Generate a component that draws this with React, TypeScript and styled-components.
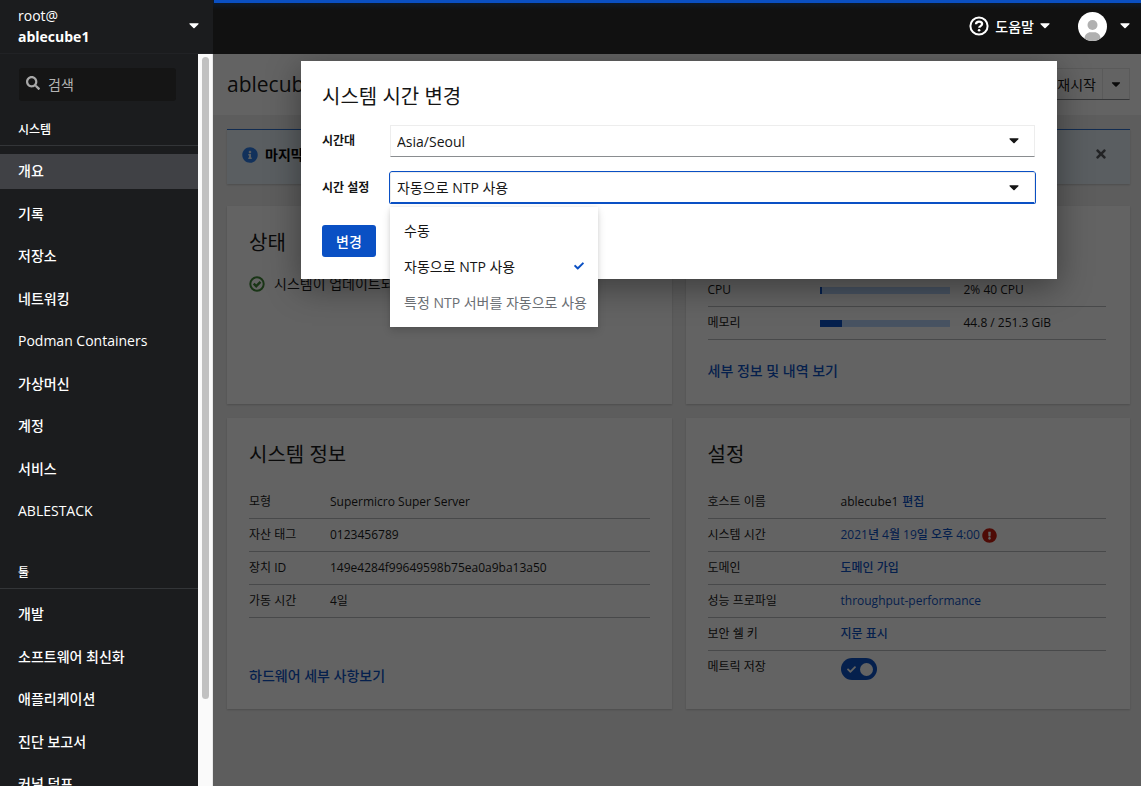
import React, { useState } from "react";
import styled, { createGlobalStyle } from "styled-components";
import { FaSearch, FaInfoCircle, FaTimes, FaExclamationCircle, FaCheck, FaCaretDown } from "react-icons/fa";

const GlobalStyle = createGlobalStyle`
  *, *::before, *::after { box-sizing: border-box; }
  body {
    margin: 0;
    color: #151515;
    font-family: "Open Sans", "Noto Sans CJK KR", sans-serif;
    font-size: 14px;
    line-height: 21px;
  }
  button, input, select { font: inherit; color: inherit; }
  ul { margin: 0; padding: 0; list-style: none; }
  a { color: inherit; text-decoration: none; }
`;

const Shell = styled.div`
  display: grid;
  grid-template-columns: 213px minmax(0, 1fr);
  height: 100vh;
  overflow: hidden;
`;

/* ---------- sidebar ---------- */

const Sidebar = styled.aside`
  display: flex;
  flex-direction: column;
  min-height: 0;
  background: #1b1c1e;
  color: #fff;
`;

const HostButton = styled.button`
  display: flex;
  flex: none;
  align-items: center;
  justify-content: space-between;
  height: 54px;
  padding: 0 14px 2px 18px;
  border: 0;
  border-bottom: 1px solid #212225;
  background: transparent;
  text-align: left;
`;

const HostName = styled.span`
  display: flex;
  flex-direction: column;
`;

const SidebarBody = styled.div`
  display: flex;
  flex: 1;
  min-height: 0;
`;

const NavScroll = styled.div`
  flex: 1;
  min-width: 0;
  overflow: hidden;
`;

const ScrollTrack = styled.div`
  width: 15px;
  padding: 3px 3px 0 4px;
  border-right: 1px solid #e8e8e8;
  background: #fafafa;
`;

const ScrollThumb = styled.div`
  height: 88%;
  border-radius: 4px;
  background: #c1c1c1;
`;

const SearchBox = styled.label`
  display: flex;
  align-items: center;
  gap: 8px;
  height: 33px;
  margin: 14px 22px 11px 19px;
  padding: 0 7px;
  border-radius: 3px;
  background: #151515;
  color: #a8a8a8;

  svg { flex: none; margin-bottom: 4px; }
`;

const SearchInput = styled.input`
  width: 100%;
  min-width: 0;
  padding: 0;
  border: 0;
  outline: 0;
  background: transparent;

  &::placeholder { color: #b4b4b4; opacity: 1; }
`;

const NavHeading = styled.h2`
  margin: 0 0 8px;
  padding: 9px 18px 7px;
  border-bottom: 1px solid #333538;
  font-size: 12px;
  font-weight: 500;
  line-height: 17px;
`;

const NavList = styled.ul<{ $height: number }>`
  display: flex;
  flex-direction: column;
  justify-content: space-between;
  height: ${(p) => p.$height}px;
  margin-bottom: 26px;
`;

const NavLink = styled.a<{ $active?: boolean }>`
  display: block;
  padding: 6px 18px 8px;
  background: ${(p) => (p.$active ? "#404145" : "transparent")};
  font-weight: 500;
  white-space: nowrap;
`;

/* ---------- top bar ---------- */

const Workspace = styled.div`
  display: flex;
  flex-direction: column;
  min-height: 0;
`;

const TopBar = styled.header`
  position: relative;
  display: flex;
  flex: none;
  align-items: center;
  justify-content: flex-end;
  gap: 28px;
  height: 54px;
  padding: 0 11px 2px 0;
  background: linear-gradient(#0c1a2b 3px, #111 10px);
  color: #fff;
`;

const Progress = styled.div`
  position: absolute;
  top: 0;
  right: 0;
  left: 1px;
  height: 3px;
  background: #0a50c4;
`;

const TopButton = styled.button<{ $gap: number }>`
  display: flex;
  align-items: center;
  gap: ${(p) => p.$gap}px;
  padding: 0;
  border: 0;
  background: transparent;
  font-weight: 500;
`;

/* ---------- page ---------- */

const Page = styled.main`
  position: relative;
  flex: 1;
  min-height: 0;
  overflow: hidden;
  background: #f0f0f0;
`;

const PageHeader = styled.div`
  display: flex;
  align-items: center;
  justify-content: space-between;
  height: 61px;
  padding: 0 11px 1px 14px;
  background: #fff;
`;

const HostTitle = styled.h1`
  margin: 0;
  font-size: 21px;
  font-weight: 400;
  line-height: 30px;
`;

const SplitButton = styled.div`
  display: flex;
  height: 32px;
  border: 1px solid #e6e6e6;
  border-bottom-color: #8a8d90;
`;

const SplitPart = styled.button`
  display: flex;
  align-items: center;
  padding: 0 6px;
  border: 0;
  background: transparent;

  & + & { border-left: 1px solid #e6e6e6; }
`;

const Content = styled.div`
  display: flex;
  flex-direction: column;
  gap: 22px;
  padding: 14px 11px 14px 14px;
`;

const Alert = styled.div`
  display: flex;
  align-items: flex-start;
  justify-content: space-between;
  height: 55px;
  padding: 14px 22px 0 15px;
  border-top: 1px solid #2b6fd0;
  background: #e7f1fa;
  box-shadow: 0 1px 2px rgba(3, 3, 3, 0.2);
`;

const AlertTitle = styled.strong`
  display: flex;
  align-items: center;
  gap: 7px;
  color: #000;

  svg { color: #2b7de9; }
`;

const IconButton = styled.button`
  display: flex;
  padding: 3px 0;
  border: 0;
  background: transparent;
  color: #55585c;
`;

const Cards = styled.div`
  display: grid;
  grid-template-columns: repeat(2, minmax(0, 1fr));
  gap: 14px;
`;

const Card = styled.section`
  display: flex;
  flex-direction: column;
  padding: 20px 22px 22px;
  background: #fff;
  box-shadow: 0 1px 2px rgba(3, 3, 3, 0.2);
`;

const SettingsCard = styled(Card)`
  padding-right: 24px;
`;

const CardTitle = styled.h2`
  margin: 0 0 14px;
  font-size: 20px;
  font-weight: 400;
  line-height: 34px;
`;

const StatusLine = styled.div`
  display: flex;
  align-items: center;
  gap: 9px;
  line-height: 20px;

  svg { color: #3e8635; }
`;

const CardLink = styled.a`
  margin-top: auto;
  padding-top: 20px;
  color: #0a50c4;
  font-weight: 500;
  line-height: 22px;
`;

const DataTable = styled.table<{ $label: number }>`
  width: 100%;
  border-spacing: 0;
  table-layout: fixed;
  font-size: 12px;
  line-height: 16px;

  th, td {
    height: 33px;
    padding: 8px 0;
    border-bottom: 1px solid #b8bbbe;
    font-weight: 400;
    text-align: left;
    vertical-align: top;
    white-space: nowrap;
  }
  th { width: ${(p) => p.$label}px; }
  tr.last th, tr.last td { height: 36px; border-bottom: 0; }
  tr.last td { padding: 7px 0; }
`;

const Link = styled.a`
  color: #0a50c4;
  font-weight: 500;
`;

const ValueLine = styled.span<{ $gap: number }>`
  display: flex;
  align-items: center;
  gap: ${(p) => p.$gap}px;
  height: 16px;
`;

const Meter = styled.span`
  display: block;
  width: 130px;
  height: 7px;
  background: #b9d4fb;
`;

const MeterFill = styled.span`
  display: block;
  height: 100%;
  background: #0a50c4;
`;

const Toggle = styled.label`
  position: relative;
  display: flex;
  align-items: center;
  justify-content: space-between;
  width: 36px;
  height: 22px;
  padding: 0 4px 0 6px;
  border-radius: 11px;
  background: #0a50c4;
  color: #fff;

  input {
    position: absolute;
    inset: 0;
    width: 100%;
    height: 100%;
    margin: 0;
    opacity: 0;
  }
`;

const ToggleKnob = styled.span`
  width: 13px;
  height: 13px;
  border-radius: 50%;
  background: #fff;
`;

/* ---------- dialog ---------- */

const Backdrop = styled.div`
  position: absolute;
  inset: 0;
  padding: 7px 84px 0 88px;
  background: rgba(3, 3, 3, 0.62);
`;

const Dialog = styled.form`
  padding: 18px 22px 22px 21px;
  background: #fff;
  box-shadow: 0 8px 32px rgba(3, 3, 3, 0.4);
`;

const DialogTitle = styled.h2`
  margin: 0 0 10px;
  font-size: 20px;
  font-weight: 400;
  line-height: 36px;
`;

const Field = styled.div`
  display: grid;
  grid-template-columns: 68px minmax(0, 1fr);
  align-items: center;
  margin-bottom: 15px;
`;

const FieldLabel = styled.label`
  font-size: 12px;
  font-weight: 700;
  line-height: 18px;
`;

const SelectWrap = styled.div`
  position: relative;
  display: grid;
  align-items: center;

  > svg {
    position: absolute;
    right: 16px;
    pointer-events: none;
  }
`;

const Select = styled.select<{ $focused?: boolean }>`
  appearance: none;
  width: 100%;
  height: 32px;
  padding: 0 32px 0 6px;
  border: 1px solid #ededed;
  border-bottom: ${(p) => (p.$focused ? "2px solid #0a50c4" : "1px solid #8a8d90")};
  border-radius: ${(p) => (p.$focused ? 2 : 0)}px;
  outline: none;
  box-shadow: ${(p) => (p.$focused ? "-1px 0 #0a50c4, 1px 0 #0a50c4, 0 -1px #0a50c4" : "none")};
  background: #fff;
`;

const Menu = styled.ul`
  position: absolute;
  top: 35px;
  left: 0;
  z-index: 1;
  width: 208px;
  padding: 6px 0;
  background: #fff;
  box-shadow: 0 4px 8px rgba(3, 3, 3, 0.14), 0 0 4px rgba(3, 3, 3, 0.08);
`;

const MenuItem = styled.button`
  display: flex;
  align-items: center;
  justify-content: space-between;
  width: 100%;
  height: 36px;
  padding: 0 14px 1px;
  border: 0;
  background: transparent;
  white-space: nowrap;

  &:disabled { color: #6a6e73; }
  svg { color: #0a50c4; margin-bottom: 2px; }
`;

const PrimaryButton = styled.button`
  height: 32px;
  margin-top: 6px;
  padding: 0 14px;
  border: 0;
  border-radius: 3px;
  background: #0a50c4;
  color: #fff;
  font-weight: 500;
`;

/* ---------- icons ---------- */

const Caret = () => (
  <svg width="10" height="6" viewBox="0 0 10 6" fill="currentColor" aria-hidden="true">
    <path d="M1 0.3h8c.6 0 .8.5.4.9L5.6 5c-.3.4-.9.4-1.2 0L.6 1.2C.2.8.4.3 1 .3z" />
  </svg>
);

const HelpIcon = () => (
  <svg width="20" height="20" viewBox="0 0 20 20" fill="none" stroke="currentColor" strokeWidth="2" aria-hidden="true">
    <circle cx="10" cy="10" r="8.6" />
    <path d="M7 8.200C7.100 6.400 8.400 5.600 10 5.600c1.700 0 3.100 1 3.100 2.500 0 2-2.900 2-2.900 3.700" strokeWidth="2.300" />
    <circle cx="10.100" cy="14.300" r="1.300" fill="currentColor" stroke="none" />
  </svg>
);

const StatusOkIcon = () => (
  <svg width="16" height="16" viewBox="0 0 16 16" fill="none" stroke="currentColor" aria-hidden="true">
    <circle cx="8" cy="8" r="6.700" strokeWidth="2" />
    <path d="M4.700 7.700L7.200 10.200L11.500 5.900" strokeWidth="2.400" />
  </svg>
);

const Avatar = () => (
  <svg width="29" height="29" viewBox="0 0 29 29" aria-hidden="true">
    <clipPath id="avatar-disc"><circle cx="14.500" cy="14.500" r="14.500" /></clipPath>
    <g clipPath="url(#avatar-disc)">
      <rect width="29" height="29" fill="#fff" />
      <circle cx="14.500" cy="13" r="5" fill="#b0b0b0" />
      <path d="M6.500 29v-2.500c0-4 3-6.300 6-6.300h4c3 0 6 2.300 6 6.300V29z" fill="#b0b0b0" />
    </g>
  </svg>
);

/* ---------- data ---------- */

const systemNav = ["개요", "기록", "저장소", "네트워킹", "Podman Containers", "가상머신", "계정", "서비스", "ABLESTACK"];
const toolNav = ["개발", "소프트웨어 최신화", "애플리케이션", "진단 보고서", "커널 덤프"];

const usage = [
  { label: "CPU", percent: 2, text: "2% 40 CPU" },
  { label: "메모리", percent: 17, text: "44.8 / 251.3 GiB" },
];

const systemInfo = [
  ["모형", "Supermicro Super Server"],
  ["자산 태그", "0123456789"],
  ["장치 ID", "149e4284f99649598b75ea0a9ba13a50"],
  ["가동 시간", "4일"],
];

const timeModes = [
  { value: "manual", label: "수동" },
  { value: "ntp", label: "자동으로 NTP 사용" },
  { value: "ntp-custom", label: "특정 NTP 서버를 자동으로 사용", disabled: true },
];

export default function App() {
  const [mode, setMode] = useState("ntp");
  const [open, setOpen] = useState(true);
  const [metrics, setMetrics] = useState(true);

  return (
    <>
      <GlobalStyle />
      <Shell>
        <Sidebar>
          <HostButton type="button">
            <HostName>
              <span>root@</span>
              <strong>ablecube1</strong>
            </HostName>
            <Caret />
          </HostButton>
          <SidebarBody>
            <NavScroll as="nav">
              <SearchBox>
                <FaSearch size={14} />
                <SearchInput type="search" placeholder="검색" aria-label="검색" />
              </SearchBox>
              <NavHeading>시스템</NavHeading>
              <NavList $height={375}>
                {systemNav.map((item, i) => (
                  <li key={item}><NavLink href="#" $active={i === 0}>{item}</NavLink></li>
                ))}
              </NavList>
              <NavHeading>툴</NavHeading>
              <NavList $height={205}>
                {toolNav.map((item) => (
                  <li key={item}><NavLink href="#">{item}</NavLink></li>
                ))}
              </NavList>
            </NavScroll>
            <ScrollTrack aria-hidden="true"><ScrollThumb /></ScrollTrack>
          </SidebarBody>
        </Sidebar>

        <Workspace>
          <TopBar>
            <Progress />
            <TopButton type="button" $gap={6}>
              <HelpIcon />
              도움말
              <Caret />
            </TopButton>
            <TopButton type="button" $gap={13} aria-label="세션">
              <Avatar />
              <Caret />
            </TopButton>
          </TopBar>

          <Page>
            <PageHeader>
              <HostTitle>ablecube1</HostTitle>
              <SplitButton>
                <SplitPart type="button">재시작</SplitPart>
                <SplitPart type="button" aria-label="전원 옵션"><FaCaretDown size={14} /></SplitPart>
              </SplitButton>
            </PageHeader>

            <Content>
              <Alert>
                <AlertTitle><FaInfoCircle size={16} />마지막 로그인</AlertTitle>
                <IconButton type="button" aria-label="닫기"><FaTimes size={14} /></IconButton>
              </Alert>

              <Cards>
                <Card>
                  <CardTitle>상태</CardTitle>
                  <StatusLine><StatusOkIcon />시스템이 업데이트되었습니다</StatusLine>
                </Card>

                <SettingsCard>
                  <CardTitle>사용</CardTitle>
                  <DataTable $label={112}>
                    <tbody>
                      {usage.map((row) => (
                        <tr key={row.label}>
                          <th scope="row">{row.label}</th>
                          <td>
                            <ValueLine $gap={14}>
                              <Meter><MeterFill style={{ width: `${row.percent}%` }} /></Meter>
                              {row.text}
                            </ValueLine>
                          </td>
                        </tr>
                      ))}
                    </tbody>
                  </DataTable>
                  <CardLink href="#">세부 정보 및 내역 보기</CardLink>
                </SettingsCard>

                <Card>
                  <CardTitle>시스템 정보</CardTitle>
                  <DataTable $label={81}>
                    <tbody>
                      {systemInfo.map(([label, value]) => (
                        <tr key={label}>
                          <th scope="row">{label}</th>
                          <td>{value}</td>
                        </tr>
                      ))}
                    </tbody>
                  </DataTable>
                  <CardLink href="#">하드웨어 세부 사항보기</CardLink>
                </Card>

                <SettingsCard>
                  <CardTitle>설정</CardTitle>
                  <DataTable $label={133}>
                    <tbody>
                      <tr>
                        <th scope="row">호스트 이름</th>
                        <td><ValueLine $gap={4}>ablecube1 <Link href="#">편집</Link></ValueLine></td>
                      </tr>
                      <tr>
                        <th scope="row">시스템 시간</th>
                        <td>
                          <ValueLine $gap={2}>
                            <Link href="#">2021년 4월 19일 오후 4:00</Link>
                            <FaExclamationCircle size={15} color="#c9190b" />
                          </ValueLine>
                        </td>
                      </tr>
                      <tr>
                        <th scope="row">도메인</th>
                        <td><Link href="#">도메인 가입</Link></td>
                      </tr>
                      <tr>
                        <th scope="row">성능 프로파일</th>
                        <td><Link href="#">throughput-performance</Link></td>
                      </tr>
                      <tr>
                        <th scope="row">보안 쉘 키</th>
                        <td><Link href="#">지문 표시</Link></td>
                      </tr>
                      <tr className="last">
                        <th scope="row">메트릭 저장</th>
                        <td>
                          <Toggle>
                            <input
                              type="checkbox"
                              aria-label="메트릭 저장"
                              checked={metrics}
                              onChange={() => setMetrics(!metrics)}
                            />
                            <FaCheck size={9} />
                            <ToggleKnob />
                          </Toggle>
                        </td>
                      </tr>
                    </tbody>
                  </DataTable>
                </SettingsCard>
              </Cards>
            </Content>

            <Backdrop>
              <Dialog role="dialog" aria-labelledby="dialog-title" onSubmit={(e) => e.preventDefault()}>
                <DialogTitle id="dialog-title">시스템 시간 변경</DialogTitle>
                <Field>
                  <FieldLabel htmlFor="timezone">시간대</FieldLabel>
                  <SelectWrap>
                    <Select id="timezone" defaultValue="Asia/Seoul">
                      <option>Asia/Seoul</option>
                    </Select>
                    <Caret />
                  </SelectWrap>
                </Field>
                <Field>
                  <FieldLabel htmlFor="time-mode">시간 설정</FieldLabel>
                  <SelectWrap>
                    <Select
                      id="time-mode"
                      $focused={open}
                      value={mode}
                      onChange={(e) => setMode(e.target.value)}
                      onMouseDown={(e) => { e.preventDefault(); setOpen(!open); }}
                    >
                      {timeModes.map((m) => (
                        <option key={m.value} value={m.value} disabled={m.disabled}>{m.label}</option>
                      ))}
                    </Select>
                    <Caret />
                    {open && (
                      <Menu>
                        {timeModes.map((m) => (
                          <li key={m.value}>
                            <MenuItem
                              type="button"
                              disabled={m.disabled}
                              onClick={() => { setMode(m.value); setOpen(false); }}
                            >
                              {m.label}
                              {m.value === mode && <FaCheck size={10} />}
                            </MenuItem>
                          </li>
                        ))}
                      </Menu>
                    )}
                  </SelectWrap>
                </Field>
                <PrimaryButton type="submit">변경</PrimaryButton>
              </Dialog>
            </Backdrop>
          </Page>
        </Workspace>
      </Shell>
    </>
  );
}
